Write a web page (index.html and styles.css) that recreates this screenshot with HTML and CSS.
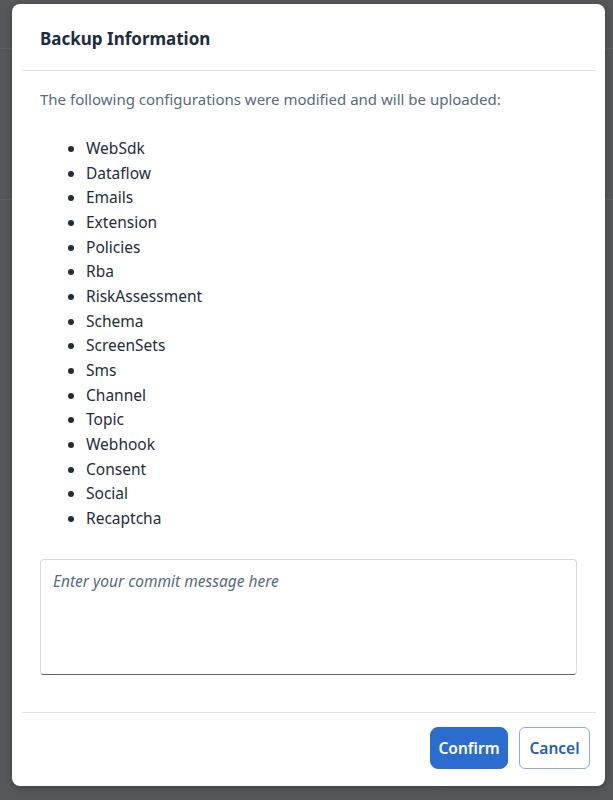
FILE: index.html
```html
<!DOCTYPE html>
<html lang="en">
<head>
<meta charset="utf-8">
<title>Backup Information</title>
<link rel="stylesheet" href="styles.css">
</head>
<body>
<div class="backdrop">
  <div class="dialog">
    <header class="dialog-header">
      <h1 class="dialog-title">Backup Information</h1>
    </header>
    <div class="separator"></div>
    <div class="dialog-content">
      <p class="description">The following configurations were modified and will be uploaded:</p>
      <ul class="config-list">
        <li>WebSdk</li>
        <li>Dataflow</li>
        <li>Emails</li>
        <li>Extension</li>
        <li>Policies</li>
        <li>Rba</li>
        <li>RiskAssessment</li>
        <li>Schema</li>
        <li>ScreenSets</li>
        <li>Sms</li>
        <li>Channel</li>
        <li>Topic</li>
        <li>Webhook</li>
        <li>Consent</li>
        <li>Social</li>
        <li>Recaptcha</li>
      </ul>
      <textarea class="commit-input" placeholder="Enter your commit message here"></textarea>
    </div>
    <div class="separator"></div>
    <footer class="dialog-footer">
      <button class="btn btn-primary">Confirm</button>
      <button class="btn btn-secondary">Cancel</button>
    </footer>
  </div>
</div>
</body>
</html>
```

FILE: styles.css
```css
html, body {
  margin: 0;
  padding: 0;
}
body {
  background: #55575b;
  font-family: "Noto Sans", "Open Sans", sans-serif;
  color: #1d2d3e;
}
.backdrop {
  height: 800px;
  padding: 4px 8px 0 12px;
  box-sizing: border-box;
  background:
    linear-gradient(#5d5f63, #5d5f63) 0 48px / 100% 1px no-repeat,
    linear-gradient(#5d5f63, #5d5f63) 0 199px / 100% 1px no-repeat,
    #55575b;
}
.dialog {
  width: 593px;
  height: 782px;
  background: #ffffff;
  border-radius: 8px;
  display: flex;
  flex-direction: column;
  box-shadow: 0 2px 6px rgba(0, 0, 0, 0.25);
}
.dialog-header {
  height: 66px;
  padding: 0 28px;
  display: flex;
  align-items: center;
  box-sizing: border-box;
}
.dialog-title {
  margin: 0;
  font-size: 17px;
  font-weight: 700;
  color: #1d2d3e;
  padding-top: 3px;
}
.separator {
  height: 1px;
  margin: 0 9px 0 10px;
  background: #e1e4e7;
  flex: none;
}
.dialog-content {
  flex: 1;
  padding: 17px 28px 0 28px;
  display: flex;
  flex-direction: column;
}
.description {
  margin: 0;
  font-size: 15px;
  line-height: 22px;
  color: #556b82;
}
.config-list {
  margin: 26px 0 0 0;
  padding-left: 46px;
  font-size: 15.5px;
  line-height: 24.67px;
  color: #1d2d3e;
}
.commit-input {
  margin-top: 28px;
  width: 537px;
  height: 116px;
  box-sizing: border-box;
  border: 1px solid #d5dadd;
  border-bottom: 1px solid #556b82;
  border-radius: 4px;
  padding: 10px 12px;
  font-family: "Noto Sans", "Open Sans", sans-serif;
  font-size: 15.5px;
  resize: none;
  outline: none;
  color: #1d2d3e;
}
.commit-input::placeholder {
  font-style: italic;
  color: #556b82;
}
.dialog-footer {
  display: flex;
  justify-content: flex-end;
  gap: 11px;
  padding: 14px 15px 17px 0;
}
.btn {
  height: 42px;
  border-radius: 8px;
  font-family: "Noto Sans", "Open Sans", sans-serif;
  font-size: 15.5px;
  font-weight: 600;
  padding: 0;
  cursor: pointer;
}
.btn-primary {
  width: 78px;
  background: #2b6dcf;
  border: 1px solid #2b6dcf;
  color: #ffffff;
}
.btn-secondary {
  width: 71px;
  background: #ffffff;
  border: 1px solid #8eabd3;
  border-radius: 6px;
  color: #2260b9;
}
```
